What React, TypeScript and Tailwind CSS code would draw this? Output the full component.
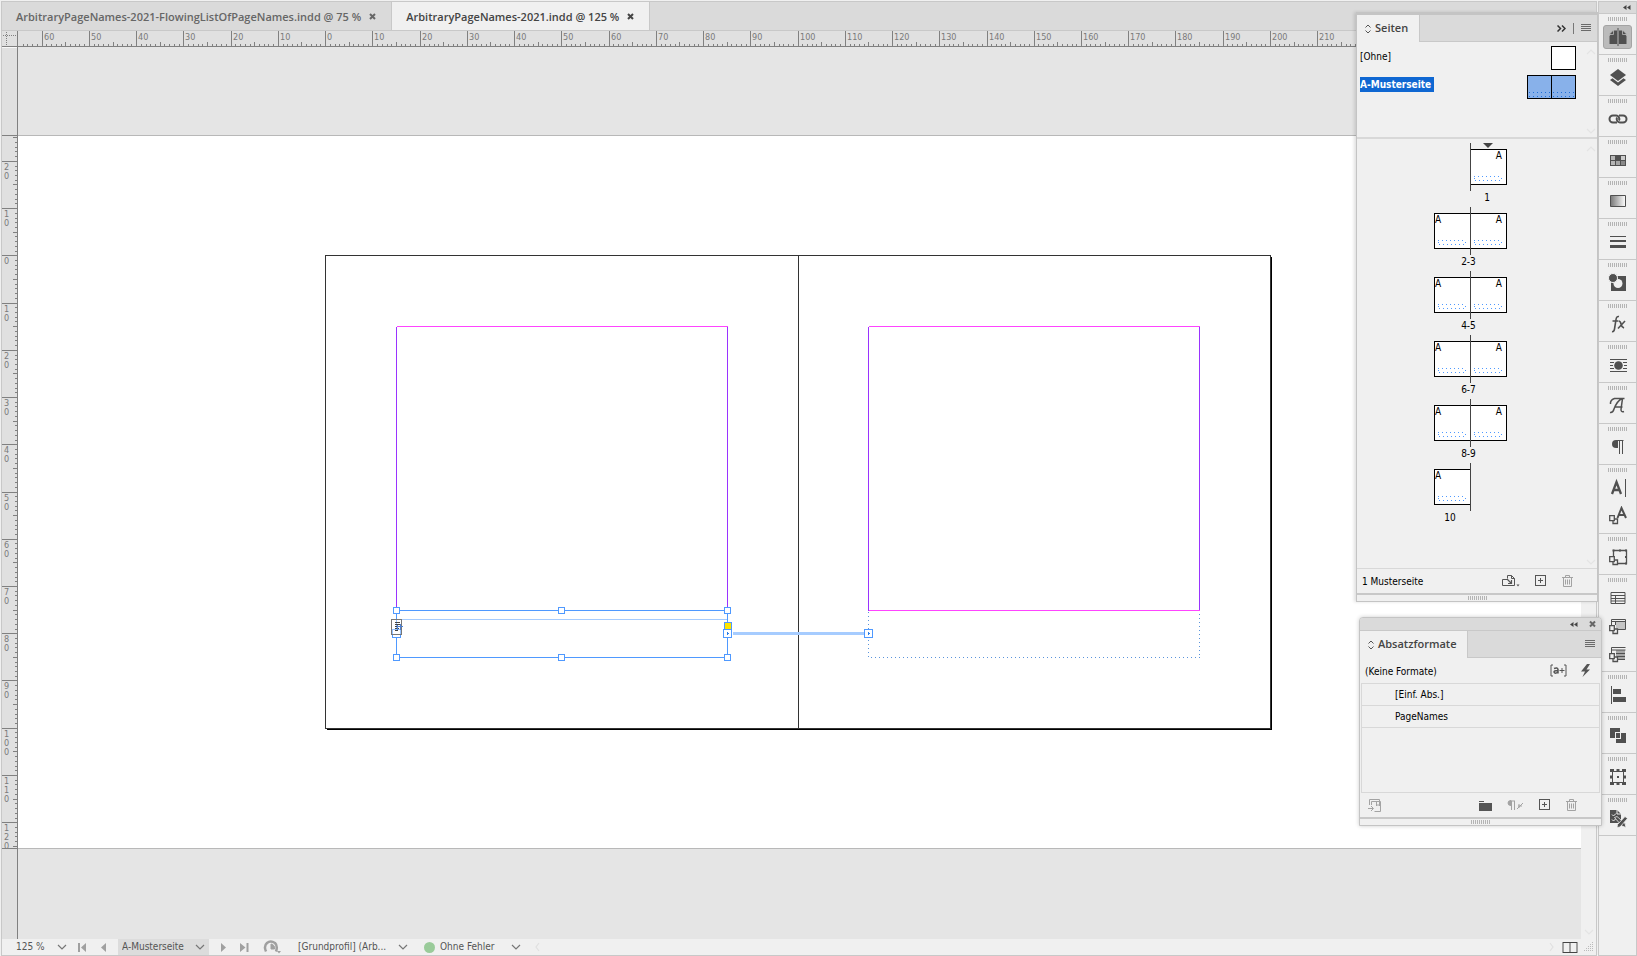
import { Fragment, ReactNode } from "react";
import clsx from "clsx";

// document scale at 125 %, in px per millimetre
const SCALE = 4.7244;
// page origin inside the canvas
const ORIGIN_X = 307.6;
const ORIGIN_Y = 208.8;

const mmX = (v: number) => Math.floor(ORIGIN_X + v * SCALE) + 0.5;
const mmY = (v: number) => Math.floor(ORIGIN_Y + v * SCALE) + 0.5;

const range = (from: number, to: number) => Array.from({ length: to - from + 1 }, (_, i) => from + i);

const documents = [
  { name: "ArbitraryPageNames-2021-FlowingListOfPageNames.indd @ 75 %", active: false },
  { name: "ArbitraryPageNames-2021.indd @ 125 %", active: true }
];

const spreads = [
  { label: "1", left: false, right: true },
  { label: "2-3", left: true, right: true },
  { label: "4-5", left: true, right: true },
  { label: "6-7", left: true, right: true },
  { label: "8-9", left: true, right: true },
  { label: "10", left: true, right: false }
];

function Icon({ size = 20, children, className }: { size?: number; children: ReactNode; className?: string }) {
  return (
    <svg width={size} height={size} viewBox={`0 0 ${size} ${size}`} fill="none" stroke="currentColor" className={clsx("shrink-0", className)} aria-hidden="true">
      {children}
    </svg>
  );
}

function Grip() {
  return (
    <svg width="19" height="4" className="shrink-0 text-[#b4b4b4]" shapeRendering="crispEdges" aria-hidden="true">
      <path d="M.5 0v4M2.5 0v4M4.5 0v4M6.5 0v4M8.5 0v4M10.5 0v4M12.5 0v4M14.5 0v4M16.5 0v4M18.5 0v4" stroke="currentColor" />
    </svg>
  );
}

function Chevron({ className, d = "M1 3l4 4 4-4" }: { className?: string; d?: string }) {
  return (
    <Icon size={10} className={className}>
      <path d={d} strokeWidth="1.2" />
    </Icon>
  );
}

function CollapseIcon() {
  return (
    <svg width="8" height="5" className="text-[#444]" aria-hidden="true">
      <path d="M3.500 0v5L0 2.500zM7.500 0v5L4 2.500z" fill="currentColor" />
    </svg>
  );
}

function MenuIcon() {
  return (
    <svg width="10" height="8" shapeRendering="crispEdges" className="text-[#6a6a6a]" aria-hidden="true">
      <path d="M0 .5h10M0 2.500h10M0 4.500h10M0 6.500h10" stroke="currentColor" />
    </svg>
  );
}

function Diamond() {
  return (
    <svg width="6" height="10" viewBox="0 0 6 10" className="text-[#555]" fill="none" stroke="currentColor" aria-hidden="true">
      <path d="M.5 3.500L3 1l2.500 2.500M.5 6.500L3 9l2.500-2.500" />
    </svg>
  );
}

function NewIcon() {
  return (
    <Icon size={12}>
      <path d="M.5.5h10v10H.5zM5.500 3v5M3 5.500h5" shapeRendering="crispEdges" />
    </Icon>
  );
}

function TrashIcon() {
  return (
    <Icon size={12} className="text-[#a3a3a3]">
      <path d="M0 2.500h11M3.500 2V.5h4V2M1.500 3v8.500h8V3M3.500 4.500v5M5.500 4.500v5M7.500 4.500v5" />
    </Icon>
  );
}

// ---------- rulers ----------

function HorizontalRuler() {
  const ticks = range(-64, 270)
    .map((mm) => `M${mmX(mm)} 15V${mm % 10 === 0 ? 0 : mm % 5 === 0 ? 11 : 13}`)
    .join("");
  return (
    <div className="relative h-4 flex-1 overflow-hidden border-b border-[#808080] bg-[#e0e0e0]">
      <svg className="absolute inset-0 size-full text-[#808080]" shapeRendering="crispEdges" aria-hidden="true">
        <path d={ticks} stroke="currentColor" />
      </svg>
      {range(-6, 21).map((n) => (
        <span key={n} className="absolute top-0 text-[9px] leading-3 text-[#7a7a7a]" style={{ left: Math.floor(mmX(n * 10)) + 2 }}>
          {Math.abs(n * 10)}
        </span>
      ))}
    </div>
  );
}

function VerticalRuler() {
  // the ticks start under the pasteboard edge
  const top = 89;
  const ticks = range(-25, 125)
    .map((mm) => `M15 ${mmY(mm) - top}H${mm % 10 === 0 ? 0 : mm % 5 === 0 ? 11 : 13}`)
    .join("");
  return (
    <div className="flex w-4 shrink-0 flex-col border-r border-[#808080] bg-[#e0e0e0]">
      <div className="h-[88px] shrink-0 border-t border-[#f8f8f8]" />
      <div className="relative flex-1 overflow-hidden border-y border-[#808080]">
        <svg className="absolute inset-0 size-full text-[#808080]" shapeRendering="crispEdges" aria-hidden="true">
          <path d={ticks} stroke="currentColor" />
        </svg>
        {range(-2, 12).map((n) => (
          <span key={n} className="absolute left-[2px] flex flex-col text-[9px] leading-[9px] text-[#7a7a7a]" style={{ top: Math.floor(mmY(n * 10)) - top + 2 }}>
            {String(Math.abs(n * 10)).split("").map((digit, i) => (
              <span key={i}>{digit}</span>
            ))}
          </span>
        ))}
      </div>
      <div className="h-[90px] shrink-0" />
    </div>
  );
}

// ---------- canvas ----------

function Handle({ x, y }: { x: number; y: number }) {
  return <rect x={x - 3} y={y - 3} width="6" height="6" fill="#fff" stroke="#4f99ff" />;
}

function Port({ x, y, arrow }: { x: number; y: number; arrow?: boolean }) {
  return (
    <>
      <rect x={x - 4} y={y - 4} width="8" height="8" fill="#fff" stroke="#4f99ff" />
      {arrow && <path d={`M${x - 1} ${y - 2.5}v5l3-2.500z`} fill="#2a7de8" />}
    </>
  );
}

function Spread() {
  const frameLeft = mmX(15);
  const frameRight = mmX(85);
  const frameTop = mmY(75);
  const frameBottom = mmY(85);
  const portY = mmY(80);
  return (
    <svg className="absolute inset-0 size-full" fill="none" shapeRendering="crispEdges" role="img" aria-label="A-Musterseite">
      {/* pages */}
      <rect x={mmX(0)} y={mmY(0)} width={mmX(200) - mmX(0)} height={mmY(100) - mmY(0)} stroke="#333" />
      <path d={`M${mmX(0) + 1} ${mmY(100) + 1}H${mmX(200) + 1}V${mmY(0) + 1}`} stroke="#000" />
      <path d={`M${mmX(100)} ${mmY(0)}V${mmY(100)}`} stroke="#333" />

      {/* margins */}
      {[15, 115].map((left) => (
        <Fragment key={left}>
          <path d={`M${mmX(left)} ${mmY(15)}V${mmY(75)}M${mmX(left + 70)} ${mmY(15)}V${mmY(75)}`} stroke="#9a33ff" />
          <path d={`M${mmX(left)} ${mmY(15)}H${mmX(left + 70)}M${mmX(left)} ${mmY(75)}H${mmX(left + 70)}`} stroke="#ff44ff" />
        </Fragment>
      ))}

      {/* linked frame on the right page */}
      <path
        d={`M${mmX(115)} ${frameTop + 1}V${frameBottom}H${mmX(185)}V${frameTop}`}
        stroke="#5a94dc"
        strokeDasharray="1 3"
      />

      {/* selected frame */}
      <path d={`M${frameLeft} ${frameTop + 9}H${frameRight}`} stroke="#a6ccff" />
      <rect x={frameLeft} y={frameTop} width={frameRight - frameLeft} height={frameBottom - frameTop} stroke="#4f99ff" />
      <path d={`M${frameRight + 5} ${portY}H${mmX(115)}`} stroke="#a6ccff" strokeWidth="3" />
      {[frameTop, frameBottom].map((y) =>
        [frameLeft, mmX(50), frameRight].map((x) => <Handle key={`${x}-${y}`} x={x} y={y} />)
      )}
      <rect x={frameRight - 3} y={portY - 11} width="7" height="7" fill="#ffe500" stroke="#4f99ff" />
      <Port x={frameLeft} y={portY} />
      <Port x={frameRight} y={portY} arrow />
      <Port x={mmX(115)} y={portY} arrow />

      {/* anchored text marker */}
      <rect x={frameLeft - 5} y={portY - 14} width="10" height="15" fill="#fff" fillOpacity="0.4" stroke="#777" />
      <path
        d={`M${frameLeft - 2} ${portY - 11}h5m-5 2h5m-5 2h5m-5 2h4m-4 2h3`}
        stroke="#444"
      />
      <path d={`M${frameLeft} ${portY - 7}h6m-2-3v6m-3-5v5`} stroke="#4f80d0" />
    </svg>
  );
}

function Canvas() {
  return (
    <div className="relative flex flex-1 flex-col overflow-hidden bg-[#e5e5e5]">
      <div className="h-[88px] shrink-0" />
      <div className="flex-1 border-y border-[#b8b8b8] bg-white" />
      <div className="h-[90px] shrink-0" />
      <Spread />
    </div>
  );
}

// ---------- document window ----------

function DocumentTabs() {
  return (
    <div className="flex h-[29px] shrink-0 border-b border-[#c8c8c8] bg-[#dadada]" role="tablist">
      {documents.map((doc) => (
        <div
          key={doc.name}
          className={clsx(
            "flex items-center gap-2 border-r border-[#c8c8c8] px-[14px] pt-[2px]",
            doc.active ? "bg-[#f0f0f0] text-[#444]" : "text-[#666]"
          )}
        >
          <button role="tab" aria-selected={doc.active} className="font-['Open_Sans'] text-[11px] font-semibold whitespace-nowrap">
            {doc.name}
          </button>
          <button aria-label={`${doc.name} schließen`}>
            <Icon size={8}>
              <path d="M1 1l5 5M6 1L1 6" strokeWidth="2" />
            </Icon>
          </button>
        </div>
      ))}
    </div>
  );
}

function StatusSelect({ label, value, className }: { label: string; value: string; className?: string }) {
  return (
    <div className={clsx("relative h-4", className)}>
      <select aria-label={label} defaultValue={value} className="block h-4 w-full appearance-none truncate bg-transparent pr-5 text-[10px] leading-4 text-[#555] outline-none">
        <option>{value}</option>
      </select>
      <Chevron className="pointer-events-none absolute top-[3px] right-1 text-[#777]" />
    </div>
  );
}

function StatusBar() {
  return (
    <div className="flex h-4 shrink-0 items-center bg-[#f0f0f0] pl-[14px] text-[#a0a0a0]">
      <StatusSelect label="Zoom" value="125 %" className="w-[55px]" />
      <div className="flex w-[47px] items-center justify-between pr-[10px] pl-[7px]">
        <button aria-label="Erste Seite">
          <Icon size={9}>
            <path d="M0 0h2v9H0zM8 0v9L3 4.500z" fill="currentColor" stroke="none" />
          </Icon>
        </button>
        <button aria-label="Vorherige Seite">
          <Icon size={9}>
            <path d="M7 0v9L2 4.500z" fill="currentColor" stroke="none" />
          </Icon>
        </button>
      </div>
      <StatusSelect label="Seite" value="A-Musterseite" className="w-[91px] bg-[#dcdcdc] pl-1" />
      <div className="flex w-[54px] items-center justify-between pr-[14px] pl-[10px]">
        <button aria-label="Nächste Seite">
          <Icon size={9}>
            <path d="M2 0v9l5-4.500z" fill="currentColor" stroke="none" />
          </Icon>
        </button>
        <button aria-label="Letzte Seite">
          <Icon size={9}>
            <path d="M6.500 0h2v9h-2zM0 0v9l5.500-4.500z" fill="currentColor" stroke="none" />
          </Icon>
        </button>
      </div>
      <button aria-label="Preflight" className="w-[35px]">
        <Icon size={18}>
          <path d="M3 13.500Q.5 8 4 5t8 0q3 3 1 8.500" strokeWidth="2.500" />
          <path d="M8 6v5h3.500A4 4 0 0 0 8 6z" fill="currentColor" strokeWidth="1" />
          <path d="M14 13h4l-2 2.500z" fill="currentColor" stroke="none" />
        </Icon>
      </button>
      <StatusSelect label="Preflight-Profil" value="[Grundprofil] (Arb..." className="w-[114px]" />
      <span className="ml-3 size-[11px] rounded-full bg-[#9acb9a]" />
      <StatusSelect label="Fehlerstatus" value="Ohne Fehler" className="ml-[5px] w-[85px]" />
      <Chevron d="M6 1L3 5l3 4" className="ml-2 text-[#e0e0e0]" />
      <div className="ml-auto flex items-center gap-[6px] pr-[2px]">
        <Chevron d="M4 1l3 4-3 4" className="text-[#e0e0e0]" />
        <button aria-label="Layoutansicht teilen">
          <svg width="16" height="11" shapeRendering="crispEdges" fill="none" aria-hidden="true">
            <path d="M1 0v11M8 0v11M15 0v11" stroke="#a0a0a0" strokeWidth="2" />
            <path d="M1 .5h14M1 10.500h14" stroke="#444" />
          </svg>
        </button>
        <svg width="10" height="10" className="text-[#bbb]" aria-hidden="true">
          <path d="M8 0h1v1H8zM6 2h1v1H6zM8 2h1v1H8zM4 4h1v1H4zM6 4h1v1H6zM8 4h1v1H8zM2 6h1v1H2zM4 6h1v1H4zM6 6h1v1H6zM8 6h1v1H8zM0 8h1v1H0zM2 8h1v1H2zM4 8h1v1H4zM6 8h1v1H6zM8 8h1v1H8z" fill="currentColor" />
        </svg>
      </div>
    </div>
  );
}

function DocumentWindow() {
  return (
    <main className="flex min-w-0 flex-1 flex-col border border-[#c8c8c8]">
      <DocumentTabs />
      <div className="flex shrink-0">
        <div className="h-4 w-4 shrink-0 border-r border-b border-[#808080] bg-[#e0e0e0]">
          <svg width="15" height="15" shapeRendering="crispEdges" aria-hidden="true">
            <path d="M4.500 1v14M1 4.500h14" stroke="#808080" strokeDasharray="1 1" />
          </svg>
        </div>
        <HorizontalRuler />
      </div>
      <div className="flex min-h-0 flex-1">
        <VerticalRuler />
        <Canvas />
        <div className="flex w-[15px] shrink-0 flex-col items-center justify-end bg-[#f0f0f0] pb-[2px] text-[#e4e4e4]">
          <Chevron />
        </div>
      </div>
      <StatusBar />
    </main>
  );
}

// ---------- pages panel ----------

function FrameDots() {
  return (
    <svg width="29" height="5" className="text-[#4f99ff]" shapeRendering="crispEdges" aria-hidden="true">
      <path d="M0 .5h28M1 4.500h28" stroke="currentColor" strokeDasharray="1 3" />
      <path d="M27 2h1v1h-1zM0 2h1v1H0z" fill="currentColor" />
    </svg>
  );
}

function PageThumb({ side }: { side: "left" | "right" }) {
  return (
    <button
      aria-label={`Seite ${side === "left" ? "links" : "rechts"}`}
      className={clsx(
        "flex size-9 flex-col justify-between border-y border-black bg-white pb-[3px]",
        side === "left" ? "items-start border-l" : "items-end border-r"
      )}
    >
      <span className={clsx("text-[10px] leading-3 text-black", side === "right" && "pr-1")}>A</span>
      <span className="self-center">
        <FrameDots />
      </span>
    </button>
  );
}

function ScrollArrows() {
  return (
    <div className="flex w-[21px] flex-col items-end justify-between py-px pr-px text-[#e4e4e4]">
      <Chevron d="M1 7l4-4 4 4" />
      <Chevron />
    </div>
  );
}

function PanelTab({ title, className }: { title: string; className?: string }) {
  return (
    <h2 className={clsx("flex items-center gap-1 border-r border-[#c8c8c8] bg-[#f0f0f0] pl-2 font-['Open_Sans'] text-[11px] font-semibold text-[#444]", className)}>
      <Diamond />
      {title}
    </h2>
  );
}

function PagesPanel() {
  return (
    <section aria-label="Seiten" className="absolute top-3 right-[39px] flex w-[242px] flex-col border border-t-[3px] border-[#c4c4c4] bg-[#f0f0f0] shadow-[-2px_0_3px_rgba(0,0,0,0.12)]">
      <header className="flex h-[27px] bg-[#dadada]">
        <PanelTab title="Seiten" className="w-[63px]" />
        <div className="flex flex-1 items-center justify-end gap-[7px] border-b border-[#c8c8c8] pr-[6px]">
          <button aria-label="Bedienfeld minimieren">
            <svg width="9" height="7" fill="none" className="text-[#333]" aria-hidden="true">
              <path d="M.5.5l3 3-3 3M5 .5l3 3-3 3" stroke="currentColor" strokeWidth="1.500" />
            </svg>
          </button>
          <span className="h-[11px] w-px bg-[#777]" />
          <button aria-label="Menü Seiten">
            <MenuIcon />
          </button>
        </div>
      </header>

      <div className="flex h-[97px] border-b-2 border-[#d8d8d8] pt-1">
        <ul className="flex flex-1 flex-col gap-[5px] pl-[3px] text-[10px] leading-3 text-black">
          <li className="flex items-start justify-between">
            <span className="pt-[5px]">[Ohne]</span>
            <span className="h-6 w-[25px] border border-black bg-white" />
          </li>
          <li className="flex items-start justify-between">
            <span className="mt-[2px] bg-[#0f67d2] pr-[3px] leading-[15px] font-bold text-white">A-Musterseite</span>
            <span className="flex h-6 border border-black">
              {[0, 1].map((n) => (
                <span key={n} className={clsx("flex items-end justify-center bg-[#88b1ea] pb-px", n === 0 ? "w-6 border-r border-black" : "w-[23px]")}>
                  <svg width="21" height="5" shapeRendering="crispEdges" aria-hidden="true">
                    <path d="M0 .5h21M0 4.500h21" stroke="#1f6fd8" strokeDasharray="1 3" />
                  </svg>
                </span>
              ))}
            </span>
          </li>
        </ul>
        <ScrollArrows />
      </div>

      <div className="flex h-[429px] pt-1">
        <ol className="flex flex-1 flex-col pl-[77px]">
          {spreads.map((spread, index) => (
            <li key={spread.label} className="relative flex h-16 w-[73px] flex-col">
              {index === 0 && (
                <svg width="10" height="5" className="absolute top-0 left-[49px] text-[#444]" aria-hidden="true">
                  <path d="M0 0h10L5 5z" fill="currentColor" />
                </svg>
              )}
              <div className="flex items-center">
                <div className="w-9">{spread.left && <PageThumb side="left" />}</div>
                <div className="h-12 w-px bg-[#444]" />
                <div className="w-9">{spread.right && <PageThumb side="right" />}</div>
              </div>
              <span
                className={clsx(
                  "text-center text-[10px] leading-[14px] text-black",
                  !spread.left && "w-10 self-end",
                  !spread.right && "w-8 self-start",
                  spread.left && spread.right && "pr-1"
                )}
              >
                {spread.label}
              </span>
            </li>
          ))}
        </ol>
        <ScrollArrows />
      </div>

      <footer className="flex h-[25px] items-center border-t border-[#d8d8d8] pr-[23px] pl-[5px] text-[#555]">
        <span className="pt-px text-[10px] text-black">1 Musterseite</span>
        <div className="ml-auto flex items-center gap-[15px]">
          <button aria-label="Seitenformat bearbeiten">
            <svg width="18" height="12" fill="none" stroke="currentColor" aria-hidden="true">
              <path d="M5 4.500H.5v6h12V3.500L9.500.5h-4v3" />
              <path d="M9.500.5v3h3" />
              <path d="M5 4l4 4M9.500 5v3.500H6" strokeWidth="1.200" />
              <path d="M14.500 9.500h3L16 11.500z" fill="currentColor" stroke="none" />
            </svg>
          </button>
          <button aria-label="Neue Seite erstellen">
            <NewIcon />
          </button>
          <button aria-label="Seite löschen">
            <TrashIcon />
          </button>
        </div>
      </footer>
      <div className="flex h-2 items-center justify-center border-t-2 border-[#c8c8c8]">
        <Grip />
      </div>
    </section>
  );
}

// ---------- paragraph styles panel ----------

function ParagraphStylesPanel() {
  return (
    <section
      aria-label="Absatzformate"
      className="absolute top-[617px] right-[35px] flex w-[243px] flex-col rounded-t-[4px] border border-[#c4c4c4] bg-[#f0f0f0] shadow-[0_0_4px_rgba(0,0,0,0.2)]"
    >
      <div className="flex h-[13px] items-center justify-end gap-[11px] rounded-t-[3px] border-b border-[#c8c8c8] bg-[#dadada] pr-1">
        <button aria-label="Auf Symbole minimieren">
          <CollapseIcon />
        </button>
        <button aria-label="Schließen" className="text-[#666]">
          <Icon size={8}>
            <path d="M1 1.500l5 5M6 1.500l-5 5" strokeWidth="2" />
          </Icon>
        </button>
      </div>
      <header className="flex h-[27px] bg-[#dadada]">
        <PanelTab title="Absatzformate" className="w-[108px]" />
        <div className="flex flex-1 items-center justify-end border-b border-[#c8c8c8] pr-[6px]">
          <button aria-label="Menü Absatzformate">
            <MenuIcon />
          </button>
        </div>
      </header>
      <div className="flex h-[25px] items-center pr-[10px] pl-[5px] text-[#555]">
        <span className="pt-px text-[10px] text-black">(Keine Formate)</span>
        <div className="ml-auto flex items-center gap-[14px]">
          <button aria-label="Abweichungen hervorheben">
            <svg width="17" height="13" fill="none" stroke="currentColor" aria-hidden="true">
              <path d="M3 1H1v11h2M14 1h2v11h-2M9.500 6.500h5M12 4v5" />
              <path d="M4 4.500q3.500-1.500 4 1v4M8 6.500q-4 0-4 1.500 1 2.500 4 0" strokeWidth="1.500" />
            </svg>
          </button>
          <button aria-label="Schnell anwenden">
            <svg width="10" height="13" aria-hidden="true">
              <path d="M6 0L0 7.500h4L1.500 13 9 5.500H5.500L9 0z" fill="currentColor" />
            </svg>
          </button>
        </div>
      </div>
      <ul className="mx-px h-[110px] border border-[#d8d8d8] text-[10px] text-black">
        {["[Einf. Abs.]", "PageNames"].map((name) => (
          <li key={name} className="flex h-[22px] items-center border-b border-[#d8d8d8] pl-[33px]">
            {name}
          </li>
        ))}
      </ul>
      <footer className="flex h-6 items-center pr-[23px] pl-2 text-[#555]">
        <button aria-label="Zu CC Library hinzufügen" className="text-[#a3a3a3]">
          <Icon size={13}>
            <path d="M1.500 6V.5h10v2M3.500 6V2.500h9v10h-6M8.500 3v4l1.500-1.500L11.500 7V3M0 9.500h5M3 7l2.500 2.500L3 12" />
          </Icon>
        </button>
        <div className="ml-auto flex items-center gap-[15px]">
          <button aria-label="Neue Formatgruppe">
            <svg width="13" height="11" aria-hidden="true">
              <path d="M0 1h5v1H0zM0 3h13v8H0z" fill="currentColor" />
            </svg>
          </button>
          <button aria-label="Abweichungen löschen" className="text-[#a3a3a3]">
            <svg width="17" height="11" fill="none" stroke="currentColor" aria-hidden="true">
              <path d="M3 1h5M4.500 1v9M7.500 1v9" />
              <path d="M4 .5a3 2.500 0 0 0 0 5z" fill="currentColor" />
              <path d="M10 9l6-6M11 6h4M12 4v4" />
            </svg>
          </button>
          <button aria-label="Neues Format erstellen">
            <NewIcon />
          </button>
          <button aria-label="Format löschen">
            <TrashIcon />
          </button>
        </div>
      </footer>
      <div className="flex h-2 items-center justify-center border-t-2 border-[#c8c8c8]">
        <Grip />
      </div>
    </section>
  );
}

// ---------- dock ----------

const smallStack = (
  <>
    <path d="M5 13.500v4h4.500V13H6" strokeWidth="1.300" fill="#f0f0f0" />
    <path d="M1.700 9.700h4.600v5H1.700z" strokeWidth="1.300" fill="#f0f0f0" />
  </>
);

const dock: { name: string; icon: ReactNode }[][] = [
  [
    {
      name: "Seiten",
      icon: (
        <>
          <path d="M1.500 9L6 3.500h3V17H1.500zM18.500 9L14 3.500h-3V17h7.500z" fill="currentColor" stroke="none" />
          <path d="M1 7.500L5.500 3v4.500zM19 7.500L14.500 3v4.500z" fill="currentColor" stroke="#bbb" strokeWidth=".8" />
          <path d="M10 1v18" strokeWidth="1" />
        </>
      )
    }
  ],
  [
    {
      name: "Ebenen",
      icon: (
        <>
          <path d="M10 1l8 6-8 6-8-6z" fill="currentColor" stroke="none" />
          <path d="M2 12l2.500-1.800L10 14.500l5.500-4.300L18 12l-8 6z" fill="currentColor" stroke="none" />
        </>
      )
    }
  ],
  [
    {
      name: "Verknüpfungen",
      icon: (
        <>
          <path d="M9 13.500H5a3.500 3.500 0 0 1 0-7h3a3.500 3.500 0 0 1 3 5" strokeWidth="2" />
          <path d="M11 6.500h4a3.500 3.500 0 0 1 0 7h-3a3.500 3.500 0 0 1-3-5" strokeWidth="2" />
        </>
      )
    }
  ],
  [
    {
      name: "Farbfelder",
      icon: (
        <>
          <path d="M2 5h16v11H2z" fill="currentColor" stroke="none" />
          <path d="M3 6h4v4H3zM3 11h4v4H3z" fill="#b5b5b5" stroke="none" />
          <path d="M13 6h4v4h-4z" fill="#ccc" stroke="none" />
          <path d="M8 11h4v4H8z" fill="#a5a5a5" stroke="none" />
          <path d="M13 11h4v4h-4z" fill="#888" stroke="none" />
        </>
      )
    }
  ],
  [
    {
      name: "Verlauf",
      icon: (
        <>
          <defs>
            <linearGradient id="dock-gradient">
              <stop offset="0" stopColor="#777" />
              <stop offset="1" stopColor="#fff" />
            </linearGradient>
          </defs>
          <path d="M2.500 4.500h15v11h-15z" fill="url(#dock-gradient)" />
        </>
      )
    }
  ],
  [{ name: "Kontur", icon: <path d="M2 4h16v1H2zM2 8h16v2H2zM2 13h16v3H2z" fill="currentColor" stroke="none" /> }],
  [
    {
      name: "Effekte",
      icon: (
        <>
          <path d="M10 3h8v15H3v-8z" fill="currentColor" stroke="none" />
          <circle cx="10" cy="10.500" r="4.500" fill="#f0f0f0" stroke="none" />
          <circle cx="5" cy="5" r="4.500" fill="currentColor" stroke="#f0f0f0" />
        </>
      )
    }
  ],
  [
    {
      name: "Objektformate fx",
      icon: (
        <>
          <path d="M4 17.500q2 .5 2.500-2.500L8 5.500Q8.500 2 11 2.500M4.500 7H10" strokeWidth="1.600" />
          <path d="M10.500 7q2 0 2.500 3t3 4M17 7L10 14.500" strokeWidth="1.600" />
        </>
      )
    }
  ],
  [
    {
      name: "Textumfluss",
      icon: (
        <>
          <path d="M2 4.500h17M2 7.500h4M15 7.500h4M2 10.500h3M16 10.500h3M2 13.500h4M15 13.500h4M2 16.500h17" />
          <circle cx="10.500" cy="10.500" r="4.300" fill="currentColor" stroke="none" />
        </>
      )
    }
  ],
  [
    {
      name: "Glyphen",
      icon: <path d="M2.500 8q-.5-4 4-5.500h10M14 2.500Q9 5 6 13q-1 4-4 3.500M14.500 2.500l-1.500 11q0 3 3 2M6.500 11h8" strokeWidth="1.500" />
    }
  ],
  [
    {
      name: "Absatz",
      icon: (
        <>
          <path d="M8 3.500h7.500M11.500 3v14M14.500 3v14" />
          <path d="M10 3v8H8a4 4 0 0 1 0-8z" fill="currentColor" stroke="none" />
        </>
      )
    }
  ],
  [
    {
      name: "Zeichen",
      icon: (
        <>
          <path d="M4 16l4.500-12L13 16M5.500 12h6" strokeWidth="2.300" />
          <path d="M17.500 1v18" />
        </>
      )
    },
    {
      name: "Zeichenformate",
      icon: (
        <>
          <path d="M9.500 12l4-10 4.500 10M11 9h5.500" strokeWidth="2" />
          {smallStack}
        </>
      )
    }
  ],
  [
    {
      name: "Objektformate",
      icon: (
        <>
          <path d="M5.500 9V3.500h13v13h-9" strokeWidth="1.300" />
          <path d="M4.500 2.500h2v2h-2zM17 2.500h2v2h-2zM17 15.500h2v2h-2zM11 2.500h2v2h-2zM17 9h2v2h-2z" fill="currentColor" stroke="none" />
          {smallStack}
        </>
      )
    }
  ],
  [
    { name: "Tabelle", icon: <path d="M3 4.500h14v11H3zM3 7.500h14M7.500 7.500v8M3 10.500h14M3 13h14" /> },
    {
      name: "Zellenformate",
      icon: (
        <>
          <path d="M8 6h9v7H8z" fill="#c4c4c4" stroke="none" />
          <path d="M3.500 9V3.500h14v10h-8M3.500 5.500h14M7.500 5.500V9" />
          {smallStack}
        </>
      )
    },
    {
      name: "Tabellenformate",
      icon: (
        <>
          <path d="M8 6h9v9H8z" fill="#a8a8a8" stroke="none" />
          <path d="M3.500 9V3.500h14M3.500 6h14M8 9.500h9M9 12.500h8M9 15.500h8" />
          {smallStack}
        </>
      )
    }
  ],
  [
    {
      name: "Ausrichten",
      icon: (
        <>
          <path d="M3.500 1v18" />
          <path d="M5 4h8v5H5zM5 12h13v5H5z" fill="currentColor" stroke="none" />
        </>
      )
    }
  ],
  [
    {
      name: "Pathfinder",
      icon: (
        <>
          <path d="M2 2h10v4H7v6H2zM13 7h5v10H8v-4h5z" fill="currentColor" stroke="none" />
          <path d="M8 7h4v5H8z" fill="currentColor" stroke="none" />
        </>
      )
    }
  ],
  [
    {
      name: "Transformieren",
      icon: (
        <>
          <path d="M4.500 4.500h11v11h-11z" />
          <path d="M2 2h4v3H2zM8.500 2h3v3h-3zM14 2h4v3h-4zM2 8.500h3v3H2zM15 8.500h3v3h-3zM2 15h4v3H2zM8.500 15h3v3h-3zM14 15h4v3h-4zM9 9h2v2H9z" fill="currentColor" stroke="none" />
        </>
      )
    }
  ],
  [
    {
      name: "Preflight",
      icon: (
        <>
          <path d="M2 2h7l4 4v9H2z" fill="currentColor" stroke="none" />
          <path d="M4 6.500L5.500 8 8 5.500M4 11.500L5.500 13 8 10.500M9 2v4h4" stroke="#f0f0f0" />
          <path d="M6.500 9.500l2.500-1 8 7 1 4-4-1.500z" fill="currentColor" stroke="#f0f0f0" strokeWidth=".8" />
          <path d="M17 8.500l2.500 2L12 19l-3 .5.5-3z" fill="currentColor" stroke="#f0f0f0" strokeWidth=".8" />
        </>
      )
    }
  ]
];

function Dock() {
  return (
    <aside className="ml-px flex w-[39px] shrink-0 flex-col border border-[#c8c8c8] bg-[#f0f0f0]">
      <div className="flex h-3 items-center justify-end border-b border-[#c8c8c8] bg-[#dadada] pr-[5px]">
        <button aria-label="Bedienfelder erweitern">
          <CollapseIcon />
        </button>
      </div>
      {dock.map((group, index) => (
        <div key={index} className="flex flex-col items-center border-b border-[#c8c8c8] py-[3px]">
          <Grip />
          <div className="mt-[2px] flex flex-col text-[#505050]">
            {group.map((item) => (
              <div key={item.name} className="flex h-7 items-center">
                <button
                  aria-label={item.name}
                  className={clsx("flex h-6 w-[29px] items-center justify-center", item.name === "Seiten" && "rounded-[3px] border border-[#a4a4a4] bg-[#bbb]")}
                >
                  <Icon>{item.icon}</Icon>
                </button>
              </div>
            ))}
          </div>
        </div>
      ))}
    </aside>
  );
}

export default function App() {
  return (
    <div className="relative flex h-screen overflow-hidden bg-[#f0f0f0] pt-px pl-px font-['DejaVu_Sans_Condensed','Open_Sans',sans-serif]">
      <DocumentWindow />
      <Dock />
      <PagesPanel />
      <ParagraphStylesPanel />
    </div>
  );
}
